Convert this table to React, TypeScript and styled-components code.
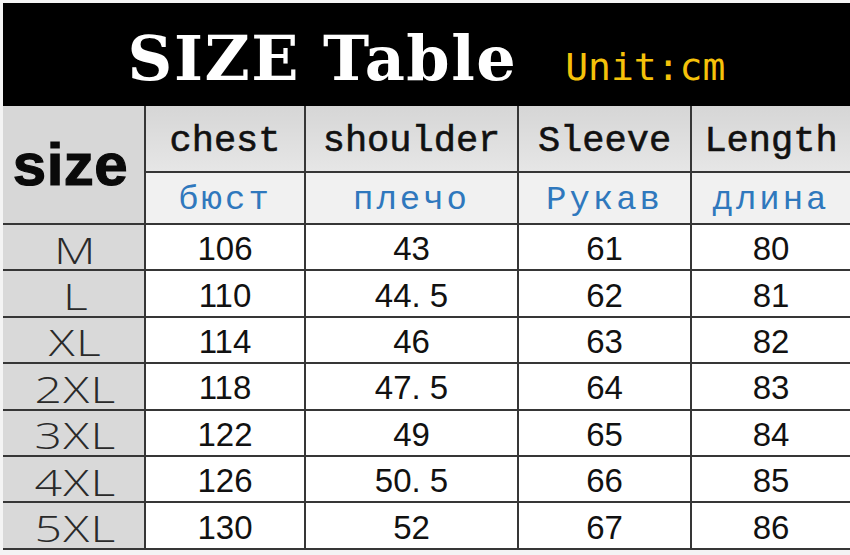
import React from "react"
import styled, { createGlobalStyle } from "styled-components"

const columns = [
    { en: "chest", ru: "бюст" },
    { en: "shoulder", ru: "плечо" },
    { en: "Sleeve", ru: "Рукав" },
    { en: "Length", ru: "длина" },
]

const rows: [string, string, string, string, string][] = [
    ["M", "106", "43", "61", "80"],
    ["L", "110", "44. 5", "62", "81"],
    ["XL", "114", "46", "63", "82"],
    ["2XL", "118", "47. 5", "64", "83"],
    ["3XL", "122", "49", "65", "84"],
    ["4XL", "126", "50. 5", "66", "85"],
    ["5XL", "130", "52", "67", "86"],
]

const App = () => {
    return (
        <Page>
            <GlobalStyles />
            <Banner>
                <Title>SIZE Table</Title>
                <Unit>Unit:cm</Unit>
            </Banner>
            <Grid>
                <SizeHead>size</SizeHead>
                {columns.map(c => (
                    <EnHead key={c.en}>{c.en}</EnHead>
                ))}
                {columns.map(c => (
                    <RuHead key={c.ru}>{c.ru}</RuHead>
                ))}
                {rows.map(r => (
                    <React.Fragment key={r[0]}>
                        <SizeCell><Wide>{r[0]}</Wide></SizeCell>
                        {r.slice(1).map((v, i) => (
                            <ValueCell key={i}>{v}</ValueCell>
                        ))}
                    </React.Fragment>
                ))}
            </Grid>
        </Page>
    )
}

export default App

const Page = styled.div`
    width: 850px;
    height: 555px;
    padding: 3px 0 0 3px;
    background: #f4f4f4;
    overflow: hidden;
`
const Banner = styled.div`
    height: 103px;
    background: #000;
    display: flex;
    align-items: baseline;
    justify-content: center;
    gap: 48px;
    padding: 9px 0 0 0;
    line-height: 94px;
`
const Title = styled.div`
    font-family: "DejaVu Serif", serif;
    font-weight: 700;
    font-size: 62px;
    color: #fff;
    letter-spacing: 1.5px;
`
const Unit = styled.div`
    font-family: "DejaVu Sans Mono", monospace;
    font-size: 38px;
    color: #f5c20a;
`
const Grid = styled.div`
    display: grid;
    grid-template-columns: 141px 158px 211px 171px 158px;
    grid-template-rows: 65px 50px repeat(7, 44.4px);
    gap: 2px;
    background: #363636;
    border-bottom: 2px solid #363636;
    width: 847px;
`
const Cell = styled.div`
    display: flex;
    align-items: center;
    justify-content: center;
    padding-top: 4px;
`
const SizeHead = styled(Cell)`
    grid-row: span 2;
    background: #d7d7d7;
    font-family: "Liberation Sans", Arial, sans-serif;
    font-weight: 700;
    font-size: 60px;
    letter-spacing: 0.5px;
    color: #0a0a0a;
    padding-top: 0;
    padding-right: 6px;
    -webkit-text-stroke: 1.2px #0a0a0a;
`
const EnHead = styled(Cell)`
    background: linear-gradient(#d6d6d6, #e6e6e6);
    font-family: "Liberation Mono", "Courier New", monospace;
    font-size: 37px;
    color: #111;
    -webkit-text-stroke: 0.6px #111;
`
const RuHead = styled(Cell)`
    background: #f1f1f1;
    font-family: "Liberation Mono", "Courier New", monospace;
    font-size: 34px;
    letter-spacing: 3px;
    color: #2f78bd;
`
const SizeCell = styled(Cell)`
    background: #d9d9d9;
    font-family: "Open Sans", sans-serif;
    font-weight: 300;
    font-size: 37px;
    color: #2a2a2a;
    padding-left: 4px;
`
const Wide = styled.span`
    display: inline-block;
    transform: scaleX(1.3);
    letter-spacing: 1px;
`
const ValueCell = styled(Cell)`
    background: #fff;
    font-family: "Liberation Sans", Arial, sans-serif;
    font-size: 33px;
    color: #111;
`
const GlobalStyles = createGlobalStyle`
    *,
    *::before,
    *::after {
        margin: 0;
        padding: 0;
        box-sizing: border-box;
    }

    body {
        background-color: #f4f4f4;
        -webkit-font-smoothing: antialiased;
    }
`
